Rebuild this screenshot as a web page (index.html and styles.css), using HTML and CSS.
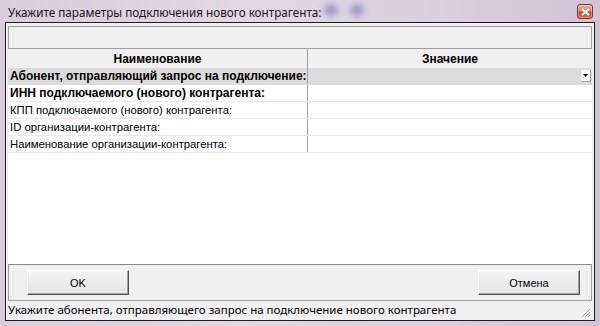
FILE: index.html
```html
<!DOCTYPE html>
<html lang="ru">
<head>
    <meta charset="UTF-8">
    <title>Укажите параметры подключения нового контрагента</title>
    <link rel="stylesheet" href="styles.css">
</head>
<body>
    <div class="window">
        <div class="titlebar">
            <span class="title">Укажите параметры подключения нового контрагента:</span>
            <span class="blob blob-1"></span>
            <span class="blob blob-2"></span>
            <button class="close-btn" title="Закрыть">
                <svg width="9" height="8" viewBox="0 0 9 8">
                    <path d="M1 1 L8 7 M8 1 L1 7" stroke="#fff" stroke-width="2.2"/>
                </svg>
            </button>
        </div>

        <div class="client">
            <div class="toolbar"></div>

            <div class="grid">
                <div class="grid-row grid-head">
                    <div class="cell cell-name">Наименование</div>
                    <div class="cell cell-value">Значение</div>
                </div>
                <div class="grid-row row-selected bold">
                    <div class="cell cell-name">Абонент, отправляющий запрос на подключение:</div>
                    <div class="cell cell-value">
                        <span class="dropdown">
                            <svg width="5" height="3" viewBox="0 0 5 3"><path d="M0 0 H5 L2.5 3 Z" fill="#000"/></svg>
                        </span>
                    </div>
                </div>
                <div class="grid-row bold">
                    <div class="cell cell-name">ИНН подключаемого (нового) контрагента:</div>
                    <div class="cell cell-value"></div>
                </div>
                <div class="grid-row">
                    <div class="cell cell-name">КПП подключаемого (нового) контрагента:</div>
                    <div class="cell cell-value"></div>
                </div>
                <div class="grid-row">
                    <div class="cell cell-name">ID организации-контрагента:</div>
                    <div class="cell cell-value"></div>
                </div>
                <div class="grid-row">
                    <div class="cell cell-name">Наименование организации-контрагента:</div>
                    <div class="cell cell-value"></div>
                </div>
            </div>

            <div class="buttons">
                <button class="btn">OK</button>
                <button class="btn">Отмена</button>
            </div>

            <div class="statusbar">
                <span>Укажите абонента, отправляющего запрос на подключение нового контрагента</span>
                <svg class="grip" width="10" height="10" viewBox="0 0 10 10">
                    <path d="M9 1 L1 9 M9 4 L4 9 M9 7 L7 9" stroke="#a0a0a0" stroke-width="1"/>
                    <path d="M10 2 L2 10 M10 5 L5 10 M10 8 L8 10" stroke="#fff" stroke-width="1"/>
                </svg>
            </div>
        </div>
    </div>
</body>
</html>
```

FILE: styles.css
```css
:root {
    --frame: #d6c8d9;
    --panel: #f0f0f0;
    --line: #a0a0a0;
    --dark: #1c1c1c;
}

body {
    margin: 0;
    width: 600px;
    height: 326px;
    overflow: hidden;
    font-family: 'Liberation Sans', Arial, sans-serif;
}

.window {
    width: 600px;
    height: 326px;
    display: flex;
    flex-direction: column;
    background: linear-gradient(90deg, #d9cedc 0%, #e2d8e4 40%, #dccfdf 70%, #d3c3d6 100%);
}

.titlebar {
    position: relative;
    height: 22px;
    flex: none;
    display: flex;
    align-items: center;
    padding-left: 8px;
}

.title {
    font-family: 'Noto Sans', 'Open Sans', sans-serif;
    font-size: 11.7px;
    color: #151515;
    padding-top: 1px;
}

.blob {
    position: absolute;
    top: 4px;
    width: 14px;
    height: 12px;
    border-radius: 50%;
    background: #8688c4;
    filter: blur(3px);
    opacity: 0.8;
}

.blob-1 { left: 324px; }
.blob-2 { left: 350px; }

.close-btn {
    position: absolute;
    top: 4px;
    right: 7px;
    width: 16px;
    height: 15px;
    padding: 0;
    border: 1px solid #7d3a2c;
    border-radius: 3px;
    background: linear-gradient(180deg, #f0b0a0 0%, #e07c62 45%, #c9482e 55%, #d9694a 100%);
    box-shadow: inset 0 0 0 1px rgba(255, 255, 255, 0.35);
    display: flex;
    align-items: center;
    justify-content: center;
}

.client {
    flex: 1;
    margin: 0 5px 5px 5px;
    border: 1px solid var(--dark);
    background: var(--panel);
    display: flex;
    flex-direction: column;
}

.toolbar {
    height: 21px;
    margin: 3px 2px 0 2px;
    border: 1px solid var(--line);
    border-bottom: none;
    background: var(--panel);
    flex: none;
}

.grid {
    flex: 1;
    margin: 0 2px;
    background: #fff;
    border-top: 1px solid var(--line);
    border-bottom: 1px solid #888;
    font-size: 11.3px;
    color: #000;
}

.grid-row {
    display: flex;
    height: 16px;
    border-bottom: 1px solid #e8e8e8;
}

.grid-head {
    height: 19px;
    background: var(--panel);
    border-bottom: none;
    font-weight: bold;
    font-size: 12px;
}

.grid-head .cell {
    justify-content: center;
    padding-left: 0;
}

.cell {
    display: flex;
    align-items: center;
    white-space: nowrap;
    overflow: hidden;
}

.cell-name {
    width: 300px;
    padding-left: 2px;
    box-sizing: border-box;
    border-right: 1px solid var(--line);
}

.cell-value {
    flex: 1;
    justify-content: flex-end;
}

.bold {
    font-weight: bold;
    font-size: 12px;
}

.row-selected {
    background: #dcdcdc;
    border-bottom-color: #dcdcdc;
}

.dropdown {
    width: 9px;
    height: 11px;
    margin-right: 1px;
    background: #fff;
    border-right: 1px solid #a0a0a0;
    border-bottom: 1px solid #a0a0a0;
    display: flex;
    align-items: center;
    justify-content: center;
}

.buttons {
    height: 35px;
    flex: none;
    margin: 0 2px;
    border-left: 1px solid var(--line);
    border-right: 1px solid var(--line);
    display: flex;
    align-items: center;
    justify-content: space-between;
    padding: 0 11px 0 18px;
}

.btn {
    width: 102px;
    height: 25px;
    font-family: 'Liberation Sans', Arial, sans-serif;
    font-size: 11px;
    color: #000;
    background: linear-gradient(180deg, #f4f4f4, #e6e6e6);
    border: 1px solid;
    border-color: #fff #555 #555 #fff;
    box-shadow: inset -1px -1px 0 #a0a0a0;
    padding: 0;
}

.statusbar {
    height: 17px;
    flex: none;
    margin: 0 2px 2px 2px;
    border-top: 1px solid var(--line);
    display: flex;
    align-items: center;
    justify-content: space-between;
    font-family: 'Noto Sans', 'Open Sans', sans-serif;
    font-size: 11.5px;
    color: #000;
}

.grip {
    margin-right: 1px;
    align-self: flex-end;
}
```
